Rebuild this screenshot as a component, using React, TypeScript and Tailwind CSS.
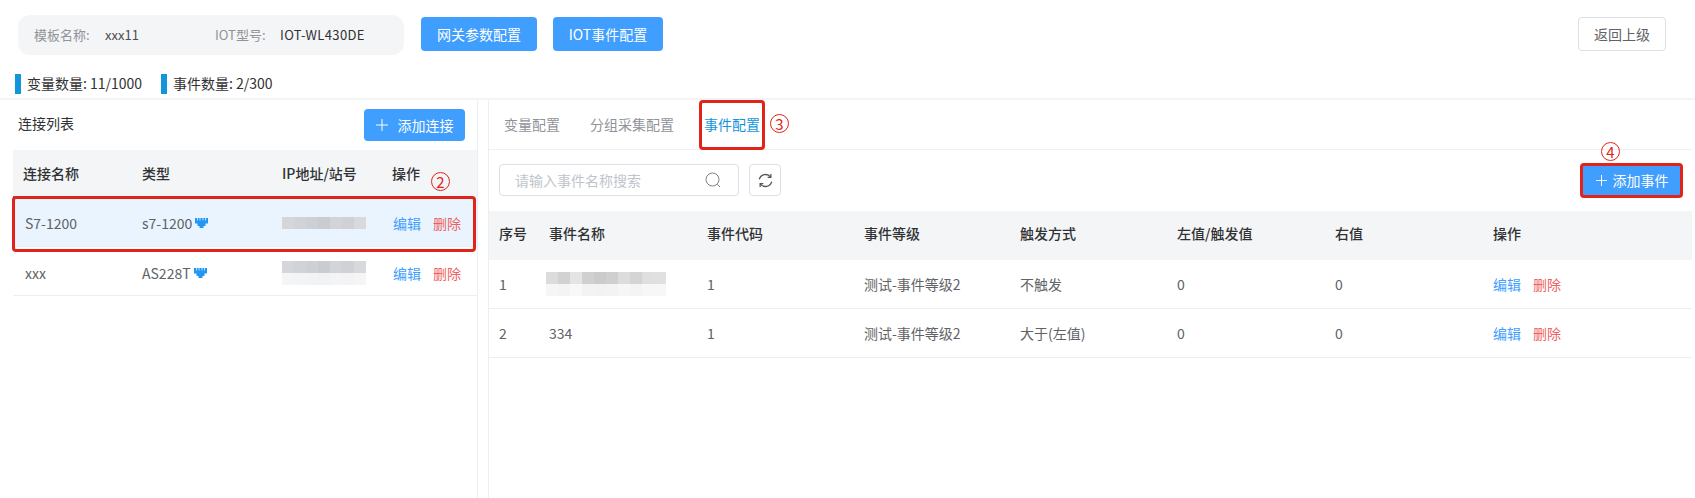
const font = { fontFamily: '"Noto Sans CJK SC", sans-serif' };

const connections = [
  { name: "S7-1200", type: "s7-1200", active: true },
  { name: "xxx", type: "AS228T", active: false },
];

const events = [
  { id: "1", name: "", code: "1", level: "测试-事件等级2", trigger: "不触发", left: "0", right: "0" },
  { id: "2", name: "334", code: "1", level: "测试-事件等级2", trigger: "大于(左值)", left: "0", right: "0" },
];

function PortIcon() {
  return (
    <svg width="13" height="10" viewBox="0 0 13 10" className="ml-[3px] shrink-0">
      <path d="M0 0h13v5.5h-2.5V8H8.5v2h-4V8H2.5V5.5H0z" fill="#2196f3" />
      <path d="M2.5 0v2.5M5 0v2.5M8 0v2.5M10.5 0v2.5" stroke="#e8f4ff" strokeWidth="0.8" />
    </svg>
  );
}

function Mosaic({ cols, two }: { cols: string[]; two?: boolean }) {
  return (
    <div className="flex flex-col">
      <div className="flex h-3">
        {cols.map((c, i) => (
          <div key={i} className="w-3" style={{ background: c }} />
        ))}
      </div>
      {two && (
        <div className="flex h-3">
          {cols.map((c, i) => (
            <div key={i} className="w-3 opacity-25" style={{ background: c }} />
          ))}
        </div>
      )}
    </div>
  );
}

function Circled({ n, className }: { n: string; className: string }) {
  return (
    <span className={`absolute flex h-[19px] w-[19px] items-center justify-center rounded-full border border-[#e2231a] text-[15px] leading-none text-[#e2231a] ${className}`}>
      {n}
    </span>
  );
}

function PlusIcon({ size }: { size: number }) {
  return (
    <svg width={size} height={size} viewBox="0 0 12 12" stroke="currentColor" strokeWidth="1" fill="none">
      <path d="M6 0v12M0 6h12" />
    </svg>
  );
}

function EventCols(p: { a: React.ReactNode; b: React.ReactNode; c: React.ReactNode; d: React.ReactNode; e: React.ReactNode; f: React.ReactNode; g: React.ReactNode; h: React.ReactNode }) {
  return (
    <>
      <span className="w-[60px] pl-[10px]">{p.a}</span>
      <span className="w-[158px]">{p.b}</span>
      <span className="w-[157px]">{p.c}</span>
      <span className="w-[156px]">{p.d}</span>
      <span className="w-[157px]">{p.e}</span>
      <span className="w-[158px]">{p.f}</span>
      <span className="w-[158px]">{p.g}</span>
      <span>{p.h}</span>
    </>
  );
}

export default function App() {
  return (
    <div className="relative h-[498px] w-[1695px] overflow-hidden bg-white text-[14px] text-[#606266]" style={font}>
      <div className="flex h-[73px] items-start pl-[18px] pr-[29px] pt-[15px]">
        <div className="flex h-10 w-[386px] items-center rounded-xl bg-[#f4f5f7] pl-4 text-[13px]">
          <span className="w-[71px] text-[#909399]">模板名称:</span>
          <span className="w-[110px] text-[#4a4d52]">xxx11</span>
          <span className="w-[65px] text-[#909399]">IOT型号:</span>
          <span className="tracking-[0.35px] text-[#303133]">IOT-WL430DE</span>
        </div>
        <button className="ml-[17px] mt-0.5 h-[34px] w-[116px] rounded bg-[#409eff] text-white">网关参数配置</button>
        <button className="ml-4 mt-0.5 h-[34px] w-[110px] rounded bg-[#409eff] text-white">IOT事件配置</button>
        <button className="ml-auto mt-0.5 h-[34px] w-[88px] rounded border border-[#dcdfe6] text-[#606266]">返回上级</button>
      </div>

      <div className="flex h-[25px] items-start pl-[15px] text-[14px] text-[#303133]">
        <div className="flex w-[146px] items-center">
          <span className="mr-[6px] h-5 w-[6px] bg-[#1296db]" />
          变量数量: 11/1000
        </div>
        <div className="flex items-center">
          <span className="mr-[6px] h-5 w-[6px] bg-[#1296db]" />
          事件数量: 2/300
        </div>
      </div>

      <div className="flex h-[400px] border-t-2 border-[#f3f4f6]">
        <div className="w-[478px] shrink-0 border-r border-[#eceef1]">
          <div className="flex h-[50px] items-start justify-between pl-[18px] pr-3 pt-[9px]">
            <span className="mt-1 text-[#303133]">连接列表</span>
            <button className="flex h-8 w-[101px] items-center justify-center gap-[10px] rounded bg-[#409eff] text-white">
              <PlusIcon size={12} />
              添加连接
            </button>
          </div>
          <div className="ml-[13px] flex h-[46px] items-center bg-[#f3f5f7] font-medium text-[#303133]">
            <span className="w-[129px] pl-[10px]">连接名称</span>
            <span className="w-[140px]">类型</span>
            <span className="w-[110px]">IP地址/站号</span>
            <span>操作</span>
          </div>
          {connections.map((c) => (
            <div
              key={c.name}
              className={`ml-[13px] flex items-center border-b border-[#ebeef5] pt-1 ${c.active ? "h-[51px] border-l-2 border-l-[#1296db] bg-[#e9f4fe]" : "h-[49px] pl-[2px]"}`}
            >
              <span className="w-[127px] pl-[10px]">{c.name}</span>
              <span className="flex w-[140px] items-center">
                {c.type}
                <PortIcon />
              </span>
              <span className="w-[111px]">
                <Mosaic
                  two={!c.active}
                  cols={["#d4d6da", "#d0d3d8", "#cdd0d4", "#c9ccd1", "#d2d4d8", "#cfd1d6", "#d7d9dc"]}
                />
              </span>
              <a className="w-10 text-[#409eff]">编辑</a>
              <a className="text-[#ee5f5f]">删除</a>
            </div>
          ))}
        </div>

        <div className="ml-[10px] flex-1 border-l border-[#eceef1] pr-[3px]">
          <div className="flex h-[50px] items-center gap-[30px] border-b border-[#f0f1f3] pl-[15px] text-[#909399]">
            <span>变量配置</span>
            <span>分组采集配置</span>
            <span className="text-[#1296db]">事件配置</span>
          </div>
          <div className="flex h-[61px] items-start pl-[10px] pr-[11px] pt-[14px]">
            <div className="flex h-8 w-[240px] items-center justify-between rounded border border-[#dcdfe6] pl-[15px] pr-[17px] text-[#c0c4cc]">
              请输入事件名称搜索
              <svg width="16" height="16" viewBox="0 0 16 16" fill="none" stroke="#7d8187" strokeWidth="1">
                <circle cx="7.5" cy="7.5" r="6.5" />
                <path d="M12.3 12.3l2.7 2.7" />
              </svg>
            </div>
            <button className="ml-[10px] flex h-8 w-8 items-center justify-center rounded border border-[#dcdfe6]">
              <svg width="15" height="15" viewBox="0 0 14 14" fill="none" stroke="#54585e" strokeWidth="1.2">
                <path d="M1.2 6A6 6 0 0 1 11.8 3.8M12.8 8A6 6 0 0 1 2.2 10.2" />
                <path d="M12 1v3h-3M2 13v-3h3" />
              </svg>
            </button>
            <button className="ml-auto flex h-8 w-[98px] items-center justify-center gap-[6px] bg-[#409eff] text-white">
              <PlusIcon size={11} />
              添加事件
            </button>
          </div>
          <div className="flex h-[49px] items-center bg-[#f3f5f7] pb-1 font-medium text-[#303133]">
            <EventCols a="序号" b="事件名称" c="事件代码" d="事件等级" e="触发方式" f="左值/触发值" g="右值" h="操作" />
          </div>
          {events.map((e) => (
            <div key={e.id} className="flex h-[49px] items-center border-b border-[#ebeef5] pt-px">
              <EventCols
                a={e.id}
                b={
                  e.name || (
                    <div className="-ml-[3px] -mt-px">
                      <Mosaic two cols={["#dcdcdc", "#d2d2d2", "#e4e4e4", "#d0d0d0", "#cbcbcb", "#cfcfcf", "#dcdcdc", "#d4d4d4", "#dfdfdf", "#e0e0e0"]} />
                    </div>
                  )
                }
                c={e.code}
                d={e.level}
                e={e.trigger}
                f={e.left}
                g={e.right}
                h={
                  <>
                    <a className="mr-[12px] text-[#409eff]">编辑</a>
                    <a className="text-[#ee5f5f]">删除</a>
                  </>
                }
              />
            </div>
          ))}
        </div>
      </div>

      {/* red annotations from the screenshot */}
      <div className="absolute left-[12px] top-[196px] h-[56px] w-[464px] rounded-sm border-[3px] border-[#e2231a]" />
      <Circled n="2" className="left-[431px] top-[172px]" />
      <div className="absolute left-[699px] top-[100px] h-[50px] w-[66px] rounded-sm border-[3px] border-[#e2231a]" />
      <Circled n="3" className="left-[770px] top-[114px]" />
      <div className="absolute left-[1580px] top-[163px] h-[35px] w-[103px] rounded-sm border-[3px] border-[#e2231a]" />
      <Circled n="4" className="left-[1601px] top-[142px]" />
    </div>
  );
}
